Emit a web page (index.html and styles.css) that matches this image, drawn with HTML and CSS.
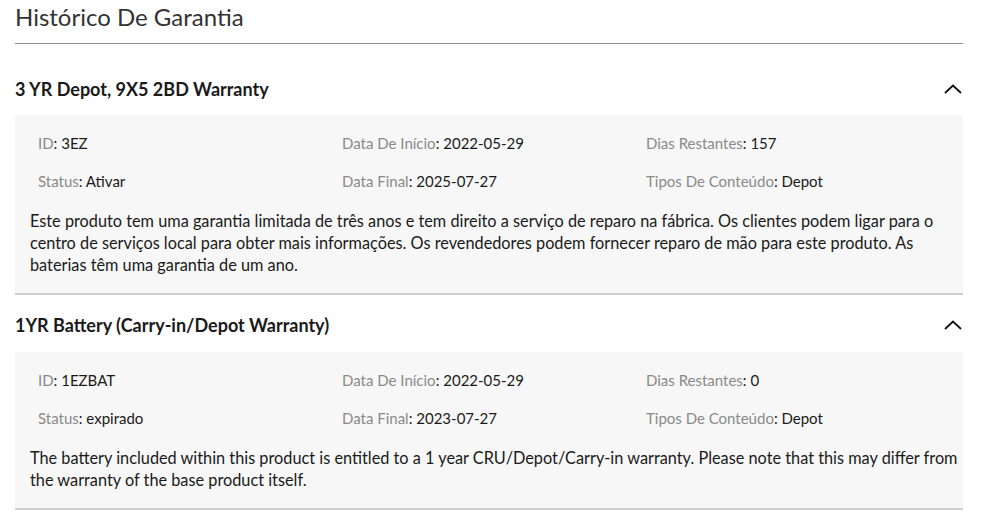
FILE: index.html
```html
<!DOCTYPE html>
<html lang="pt">
<head>
  <meta charset="UTF-8">
  <meta name="viewport" content="width=device-width, initial-scale=1.0">
  <title>Histórico De Garantia</title>
  <link rel="stylesheet" href="styles.css">
</head>
<body>
  <div class="warranty-history">
    <h2 class="page-title">Histórico De Garantia</h2>

    <div class="warranty">
      <div class="warranty-head">
        <h3>3 YR Depot, 9X5 2BD Warranty</h3>
        <svg class="chevron" width="18" height="10" viewBox="0 0 18 10">
          <polyline points="1,9 9,1.5 17,9" fill="none" stroke="#111" stroke-width="1.8"/>
        </svg>
      </div>
      <div class="warranty-body">
        <div class="details">
          <div><span class="label">ID</span>: 3EZ</div>
          <div><span class="label">Data De Início</span>: 2022-05-29</div>
          <div><span class="label">Dias Restantes</span>: 157</div>
          <div><span class="label">Status</span>: Ativar</div>
          <div><span class="label">Data Final</span>: 2025-07-27</div>
          <div><span class="label">Tipos De Conteúdo</span>: Depot</div>
        </div>
        <p>Este produto tem uma garantia limitada de três anos e tem direito a serviço de reparo na fábrica. Os clientes podem ligar para o centro de serviços local para obter mais informações. Os revendedores podem fornecer reparo de mão para este produto. As baterias têm uma garantia de um ano.</p>
      </div>
    </div>

    <div class="warranty">
      <div class="warranty-head">
        <h3>1YR Battery (Carry-in/Depot Warranty)</h3>
        <svg class="chevron" width="18" height="10" viewBox="0 0 18 10">
          <polyline points="1,9 9,1.5 17,9" fill="none" stroke="#111" stroke-width="1.8"/>
        </svg>
      </div>
      <div class="warranty-body">
        <div class="details">
          <div><span class="label">ID</span>: 1EZBAT</div>
          <div><span class="label">Data De Início</span>: 2022-05-29</div>
          <div><span class="label">Dias Restantes</span>: 0</div>
          <div><span class="label">Status</span>: expirado</div>
          <div><span class="label">Data Final</span>: 2023-07-27</div>
          <div><span class="label">Tipos De Conteúdo</span>: Depot</div>
        </div>
        <p>The battery included within this product is entitled to a 1 year CRU/Depot/Carry-in warranty. Please note that this may differ from the warranty of the base product itself.</p>
      </div>
    </div>
  </div>
</body>
</html>
```

FILE: styles.css
```css
body {
  margin: 0;
  font-family: Lato, "Open Sans", sans-serif;
  color: #1a1a1a;
  background: #fff;
}

.warranty-history {
  width: 948px;
  margin-left: 15px;
}

.page-title {
  margin: 0;
  font-size: 24px;
  font-weight: 400;
  line-height: 34px;
  color: #333;
  padding-bottom: 9px;
  border-bottom: 1px solid #8e8e8e;
}

.warranty-head {
  display: flex;
  align-items: center;
  justify-content: space-between;
  height: 24px;
  padding: 18px 0 15px;
}

.warranty:first-of-type .warranty-head {
  padding-top: 33px;
  padding-bottom: 14px;
}

.warranty-head h3 {
  margin: 0;
  font-size: 18px;
  font-weight: 700;
  line-height: 24px;
}

.chevron {
  margin-right: 1px;
}

.warranty-body {
  background-color: #f7f7f7;
  border-bottom: 2px solid #cfcfcf;
  padding: 17px 0 17px 15px;
}

.details {
  display: grid;
  grid-template-columns: 304px 304px 1fr;
  row-gap: 16px;
  padding-left: 8px;
  font-size: 15px;
  line-height: 22px;
}

.label {
  color: #8a8a8a;
}

.warranty-body p {
  margin: 18px 0 0;
  font-size: 16.3px;
  line-height: 22px;
}
```
